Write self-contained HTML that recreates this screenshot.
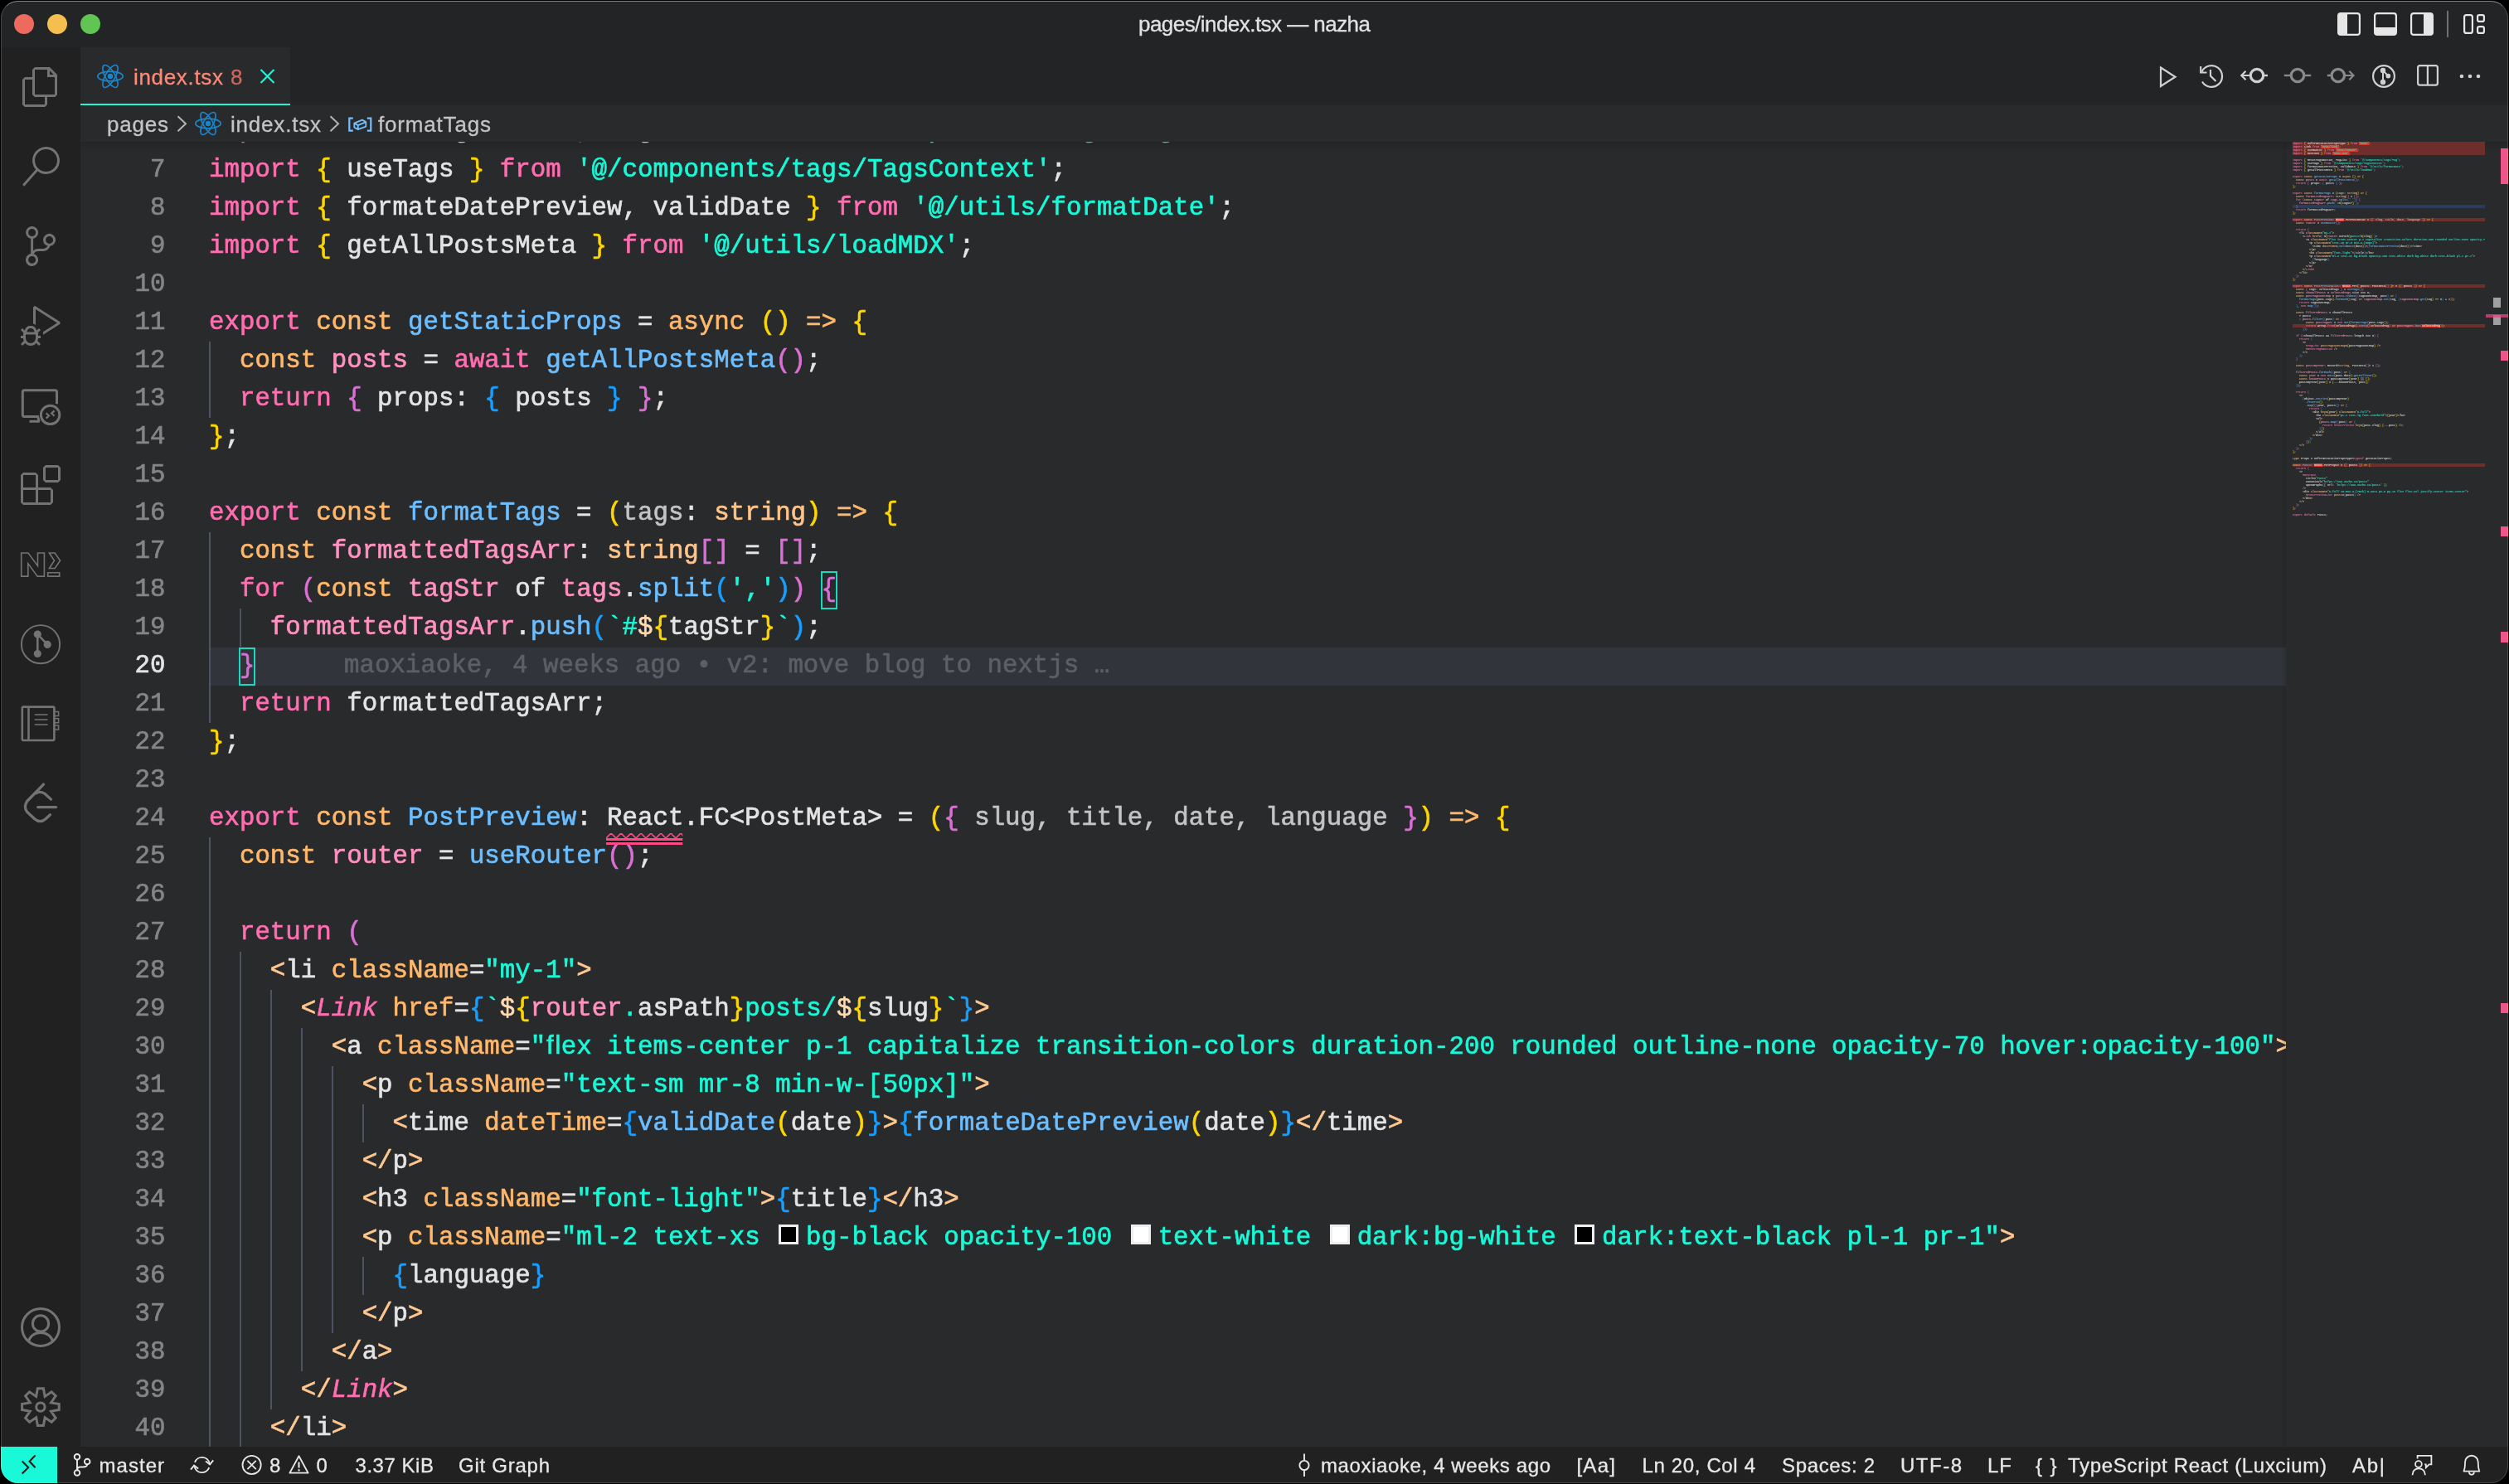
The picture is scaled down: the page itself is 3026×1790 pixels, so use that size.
<!DOCTYPE html>
<html><head><meta charset="utf-8"><title>pages/index.tsx — nazha</title>
<style>
*{box-sizing:border-box;margin:0;padding:0}
html,body{width:3026px;height:1790px;overflow:hidden;background:#000}
body{-webkit-text-stroke:.3px;font-family:"Liberation Sans",sans-serif;position:relative;-webkit-font-smoothing:antialiased}
.win{will-change:transform;position:absolute;left:1px;top:1px;width:3024px;height:1788px;border-radius:21px;overflow:hidden;background:#292a2c}
.winb{position:absolute;left:1px;top:1px;width:3024px;height:1788px;border-radius:21px;border:1px solid rgba(255,255,255,.16);border-top-color:rgba(255,255,255,.42);pointer-events:none;z-index:50}
.abs{position:absolute}
.title{position:absolute;left:0;top:0;width:3024px;height:56px;background:#232426}
.title .txt{position:absolute;left:0;width:3024px;top:8px;height:40px;line-height:40px;text-align:center;font-size:26px;color:#e2e2e2;letter-spacing:.1px}
.tl{position:absolute;top:16px;width:24px;height:24px;border-radius:50%}
.act{position:absolute;left:0;top:56px;width:96px;height:1688px;background:#212121}
.tabs{position:absolute;left:96px;top:56px;width:2928px;height:70px;background:#232426}
.tab{position:absolute;left:0;top:0;width:253px;height:70px;background:#292a2c;border-bottom:2px solid #19f9d8}
.bc{position:absolute;left:96px;top:126px;width:2928px;height:44px;background:#292a2c;font-size:26px;color:#c8c8c8}
.ed{position:absolute;left:96px;top:170px;width:2928px;height:1574px;background:#292a2c;overflow:hidden}
.code{-webkit-text-stroke:.65px;font-family:"Liberation Mono",monospace;font-size:30.778px;line-height:46px;white-space:pre;font-variant-ligatures:none}
.cl{position:absolute;left:155px;height:46px;color:#e4e4e4}
.ln{position:absolute;left:0;width:102.5px;text-align:right;height:46px;color:#858585}
.k{color:#ff6eb0}.o{color:#ffb86c}.o2{color:#ffc48a}.f{color:#6cbeff}.w{color:#e4e4e4}.v{color:#ff92c0}.p{color:#c4c4c4}
.s{color:#19f9d8}.b1{color:#ffd700}.b2{color:#da70d6}.b3{color:#179fff}.t{color:#ffc78f}.ki{color:#ff6eb0;font-style:italic}.d{color:#ffd9b0}
.cb{display:inline-block;width:24px;height:24px;border:3px solid #eee;margin:0 8.9px 0 4px;vertical-align:0px}
.g{position:absolute;width:2px;background:#4e5265}
.status{position:absolute;left:0;top:1744px;width:3024px;height:44px;background:#212121;font-size:24px;color:#e6e6e6}
.si{position:absolute;top:0;height:44px;line-height:45px;white-space:pre}
.mm{position:absolute;left:2668px;top:0px;width:232px;height:460px;overflow:hidden}
.mmt{position:absolute;left:0;top:0;transform-origin:0 0;transform:scale(0.166639);font-family:"Liberation Mono",monospace;font-size:20px;line-height:24px;white-space:pre;color:#e4e4e4;opacity:.85;font-weight:bold;-webkit-text-stroke:0}
.mmt div{height:24px}
svg{position:absolute;overflow:visible}
</style></head><body>
<div class="win">

<div class="title">
<div class="tl" style="left:16px;background:#ed6a5e"></div><div class="tl" style="left:56px;background:#f5bf4f"></div><div class="tl" style="left:96px;background:#61c554"></div>
<div class="abs" style="left:1372.0px;top:12.8px;font-size:26px;line-height:31px;height:31px;letter-spacing:-0.544px;color:#e2e2e2;white-space:pre;">pages/index.tsx — nazha</div>
<svg style="left:0px;top:0px" width="3024" height="56" viewBox="0 0 3024 56" ><g fill="none" stroke="#e6e6e6" stroke-width="2.2"><rect x="2819.1" y="15.1" width="25.8" height="25.8" rx="3"/><rect x="2863.1" y="15.1" width="25.8" height="25.8" rx="3"/><rect x="2907.1" y="15.1" width="25.8" height="25.8" rx="3"/></g><path fill="#e6e6e6" d="M2819 17a2 2 0 0 1 2-2h9v26h-9a2 2 0 0 1-2-2z"/><path fill="#e6e6e6" d="M2863 32h26v7a2 2 0 0 1-2 2h-22a2 2 0 0 1-2-2z"/><path fill="#e6e6e6" d="M2922 15h9a2 2 0 0 1 2 2v22a2 2 0 0 1-2 2h-9z"/><rect x="2950" y="12" width="2" height="32" fill="#707070"/><g fill="none" stroke="#e6e6e6" stroke-width="2.2"><rect x="2971.1" y="17.1" width="9.8" height="21.8" rx="2.5"/><rect x="2987.1" y="17.1" width="7.8" height="7.8" rx="2"/><rect x="2987.1" y="31.1" width="7.8" height="7.8" rx="2"/></g></svg>
</div>
<div class="act"><svg style="left:24px;top:24px" width="48" height="48" viewBox="0 0 24 24" ><path fill="#737373" d="M17.5 0h-9L7 1.5V6H2.5L1 7.5v15.07L2.5 24h12.07L16 22.57V18h4.7l1.3-1.43V4.5L17.5 0zm0 2.12l2.38 2.38H17.5V2.12zm-3 20.38h-12v-15H7v9.07L8.5 18h6v4.5zm6-6h-12v-15H16V6h4.5v10.5z"/></svg><svg style="left:24px;top:120px" width="48" height="48" viewBox="0 0 24 24" ><path fill="#737373" d="M15.25 0a8.25 8.25 0 0 0-6.18 13.72L1 22.88l1.12 1 8.05-9.12A8.251 8.251 0 1 0 15.25.01V0zm0 15a6.75 6.75 0 1 1 0-13.5 6.75 6.75 0 0 1 0 13.5z"/></svg><svg style="left:24px;top:216px" width="48" height="48" viewBox="0 0 24 24" ><path fill="#737373" d="M21.007 8.222A3.738 3.738 0 0 0 15.045 5.2a3.737 3.737 0 0 0 1.156 6.583 2.988 2.988 0 0 1-2.668 1.67h-2.99a4.456 4.456 0 0 0-2.989 1.165V7.4a3.737 3.737 0 1 0-1.494 0v9.117a3.776 3.776 0 1 0 1.816.099 2.99 2.99 0 0 1 2.668-1.667h2.99a4.484 4.484 0 0 0 4.223-3.039 3.736 3.736 0 0 0 3.25-3.687zM4.565 3.738a2.242 2.242 0 1 1 4.484 0 2.242 2.242 0 0 1-4.484 0zm4.484 16.441a2.242 2.242 0 1 1-4.484 0 2.242 2.242 0 0 1 4.484 0zm8.221-9.715a2.242 2.242 0 1 1 0-4.485 2.242 2.242 0 0 1 0 4.485z"/></svg><svg style="left:24px;top:312px" width="48" height="48" viewBox="0 0 24 24" ><path fill="#737373" d="M10.94 13.5l-1.32 1.32a3.73 3.73 0 0 0-7.24 0L1.06 13.5 0 14.56l1.72 1.72-.22.22V18H0v1.5h1.5v.08c.077.489.214.966.41 1.42L0 22.94 1.06 24l1.65-1.65A4.308 4.308 0 0 0 6 24a4.31 4.31 0 0 0 3.29-1.65L10.94 24 12 22.94 10.09 21c.198-.464.336-.951.41-1.45v-.1H12V18h-1.5v-1.5l-.22-.22L12 14.56l-1.06-1.06zM6 13.5a2.25 2.25 0 0 1 2.25 2.25h-4.5A2.25 2.25 0 0 1 6 13.5zm3 6a3.33 3.33 0 0 1-3 3 3.33 3.33 0 0 1-3-3v-2.25h6v2.25zm14.76-9.9v1.26L13.5 17.37V15.6l8.5-5.37L9 2v9.46a5.07 5.07 0 0 0-1.5-.72V.63L8.64 0l15.12 9.6z"/></svg><svg style="left:24px;top:504px" width="48" height="48" viewBox="0 0 24 24" ><path fill="#737373" d="M13.5 1.5L15 0h7.5L24 1.5V9l-1.5 1.5H15L13.5 9V1.5zm1.5 0V9h7.5V1.5H15zM0 15V6l1.5-1.5H9L10.5 6v7.5H18l1.5 1.5v7.5L18 24H1.5L0 22.5V15zm9-1.5V6H1.5v7.5H9zM9 15H1.5v7.5H9V15zm1.5 7.5H18V15h-7.5v7.5z"/></svg><svg style="left:24px;top:408px" width="48" height="48" viewBox="0 0 24 24" ><g fill="none" stroke="#737373" stroke-width="1.5"><path d="M21.75 11.1V3.85a1 1 0 0 0-1-1H2.15a1 1 0 0 0-1 1V17.75a1 1 0 0 0 1 1H10.3l.8 2.9"/><path d="M5.25 21.65H11.4" stroke-width="1.5"/><circle cx="17.8" cy="17.7" r="5.6"/><path d="M15.3 16.6l1.7 1.6-1.7 1.6M20.3 15.2l-1.7 1.6 1.7 1.6" stroke-width="1.1"/></g></svg><svg style="left:0px;top:0px" width="96" height="1688" viewBox="0 0 96 1688" ><g fill="none" stroke="#737373" stroke-width="1.6" stroke-linejoin="miter"><polygon points="24.7,610.0 33.0,610.0 44.5,625.6 44.5,610.0 52.4,610.0 52.4,638.1 44.1,638.1 32.8,622.6 32.8,638.1 24.7,638.1"/><polygon points="58.4,610.0 65.2,610.0 71.5,619.2 65.2,628.5 58.4,628.5 64.5,619.2"/><polygon points="56.7,633.8 70.7,633.8 70.7,638.1 56.7,638.1"/></g></svg><svg style="left:0px;top:0px" width="96" height="1688" viewBox="0 0 96 1688" ><circle cx="48" cy="720.2" r="23.1" fill="none" stroke="#737373" stroke-width="1.9"/><g fill="#737373" stroke="#737373" stroke-width="2.6"><circle cx="44.3" cy="708.1" r="3.3"/><circle cx="56.2" cy="720.4000000000001" r="3.3"/><circle cx="44.3" cy="731.5" r="3.3"/><path d="M44.3 708.1V731.5M44.3 708.1L56.2 720.4000000000001" fill="none"/></g></svg><svg style="left:0px;top:0px" width="96" height="1688" viewBox="0 0 96 1688" ><g fill="none" stroke="#737373"><rect x="25.8" y="795.6" width="38.6" height="40.4" rx="1.5" stroke-width="2.6"/><path d="M33.5 795.6V836" stroke-width="2.6"/><path d="M40.7 805H56.5M40.7 811H56.5M40.7 817H56.5" stroke-width="1.6"/><path d="M65 801.6h4.6v5h-4.6M65 809.8h4.6v5h-4.6M65 818h4.6v5h-4.6" stroke-width="1.5"/></g></svg><svg style="left:0px;top:0px" width="96" height="1688" viewBox="0 0 96 1688" ><g fill="none" stroke="#737373" stroke-width="3.3" stroke-linecap="round" stroke-linejoin="round"><path d="M51.5 889.1L31.6 909.5Q27.2 916.2 31.6 922.3L40.7 930.7Q47.4 936.5 54.1 930.7L59.5 925.8"/><path d="M42.7 899.7Q48.1 896.7 53.5 900.7L60.5 907.1"/><path d="M44.7 916.6L66.6 916.6"/></g></svg><svg style="left:0px;top:0px" width="96" height="1688" viewBox="0 0 96 1688" ><defs><clipPath id="accc"><circle cx="48" cy="1544" r="22.5"/></clipPath></defs><g fill="none" stroke="#737373" stroke-width="3"><circle cx="48" cy="1544" r="22.5"/><circle cx="48" cy="1539.4" r="9.6"/><path clip-path="url(#accc)" d="M32.5 1563Q36 1550.5 48 1550.5Q60 1550.5 63.5 1563"/></g></svg><svg style="left:0px;top:0px" width="96" height="1688" viewBox="0 0 96 1688" ><g fill="none" stroke="#737373" stroke-width="3" stroke-linejoin="miter"><polygon points="44.40,1617.77 51.40,1617.77 53.14,1627.44 61.22,1621.84 66.16,1626.78 60.56,1634.86 70.23,1636.60 70.23,1643.60 60.56,1645.34 66.16,1653.42 61.22,1658.36 53.14,1652.76 51.40,1662.43 44.40,1662.43 42.66,1652.76 34.58,1658.36 29.64,1653.42 35.24,1645.34 25.57,1643.60 25.57,1636.60 35.24,1634.86 29.64,1626.78 34.58,1621.84 42.66,1627.44"/><circle cx="47.9" cy="1640.1" r="5.2"/></g></svg></div>
<div class="tabs"><div class="tab"><svg style="left:0px;top:0px" width="253" height="70" viewBox="0 0 253 70" ><g fill="none" stroke="#1c85ca" stroke-width="1.7"><ellipse cx="36" cy="35" rx="15.2" ry="5.8" transform="rotate(0 36 35)"/><ellipse cx="36" cy="35" rx="15.2" ry="5.8" transform="rotate(60 36 35)"/><ellipse cx="36" cy="35" rx="15.2" ry="5.8" transform="rotate(120 36 35)"/></g><circle cx="36" cy="35" r="3.2" fill="#1c85ca"/></svg><div class="abs" style="left:64.0px;top:20.5px;font-size:26px;line-height:31px;height:31px;letter-spacing:0.674px;color:#ff8877;white-space:pre;">index.tsx</div><div class="abs" style="left:181.0px;top:20.5px;font-size:26px;line-height:31px;height:31px;letter-spacing:0.000px;color:#cf665c;white-space:pre;">8</div><svg style="left:0px;top:0px" width="253" height="70" viewBox="0 0 253 70" ><path d="M217.5 27L233.5 43M233.5 27L217.5 43" stroke="#19f9d8" stroke-width="2.2" fill="none"/></svg></div><svg style="left:0px;top:0px" width="2928" height="70" viewBox="0 0 2928 70" ><path d="M2509 24.5L2526.5 35.8L2509 47Z" fill="none" stroke="#d0d0d0" stroke-width="2.2" stroke-linejoin="miter"/><g fill="none" stroke="#d0d0d0" stroke-width="2.2"><path d="M2558.5 29.5A12.9 12.9 0 1 1 2559.0 41.5"/><path d="M2557.2 23V30.5H2564.5"/><path d="M2569 27V34.5L2575.5 41"/></g><g fill="none" stroke="#d0d0d0"><circle cx="2625" cy="34" r="7.7" stroke-width="3.2"/><path d="M2607 34H2616.5M2611.5 28.8L2606.3 34L2611.5 39.2" stroke-width="2.2"/><path d="M2633.5 34H2638" stroke-width="2.4"/></g><g fill="none" stroke="#8a8a8a"><circle cx="2674" cy="34" r="7.7" stroke-width="3.2"/><path d="M2657.8 34H2665.5" stroke-width="2.4"/><path d="M2682.5 34H2690.2" stroke-width="2.4"/></g><g fill="none" stroke="#8a8a8a"><circle cx="2722.8" cy="34" r="7.7" stroke-width="3.2"/><path d="M2709.8 34H2714.3" stroke-width="2.4"/><path d="M2731.3 34H2740.8M2736.3 28.8L2741.5 34L2736.3 39.2" stroke-width="2.2"/></g><circle cx="2778" cy="35" r="12.9" fill="none" stroke="#d0d0d0" stroke-width="2.2"/><g fill="#d0d0d0" stroke="#d0d0d0" stroke-width="2"><circle cx="2777" cy="28" r="2.2"/><circle cx="2777" cy="42" r="2.2"/><circle cx="2783.3" cy="34.6" r="1.9"/><path d="M2777 28V42M2777 28L2783.3 34.6" fill="none"/></g><g fill="none" stroke="#d0d0d0" stroke-width="2.2"><rect x="2819.1" y="22.099999999999994" width="23.8" height="23.6" rx="2.5"/><path d="M2830.9 22V46"/></g><circle cx="2871.9" cy="35" r="2.3" fill="#d0d0d0"/><circle cx="2882" cy="35" r="2.3" fill="#d0d0d0"/><circle cx="2892" cy="35" r="2.3" fill="#d0d0d0"/></svg></div>
<div class="bc"><div class="abs" style="left:32.0px;top:8.0px;font-size:26px;line-height:31px;height:31px;letter-spacing:0.789px;color:#c4c4c4;white-space:pre;">pages</div><div class="abs" style="left:181.0px;top:8.0px;font-size:26px;line-height:31px;height:31px;letter-spacing:0.799px;color:#c4c4c4;white-space:pre;">index.tsx</div><div class="abs" style="left:359.0px;top:8.0px;font-size:26px;line-height:31px;height:31px;letter-spacing:0.821px;color:#c4c4c4;white-space:pre;">formatTags</div><svg style="left:0px;top:0px" width="2928" height="45" viewBox="0 0 2928 45" ><path d="M117.5 13.300000000000011L127.0 22.30000000000001L117.5 31.30000000000001" fill="none" stroke="#b4b4b4" stroke-width="2"/><path d="M301.5 13.300000000000011L311.0 22.30000000000001L301.5 31.30000000000001" fill="none" stroke="#b4b4b4" stroke-width="2"/><g fill="none" stroke="#1c85ca" stroke-width="1.7"><ellipse cx="154" cy="22" rx="15.2" ry="5.8" transform="rotate(0 154 22)"/><ellipse cx="154" cy="22" rx="15.2" ry="5.8" transform="rotate(60 154 22)"/><ellipse cx="154" cy="22" rx="15.2" ry="5.8" transform="rotate(120 154 22)"/></g><circle cx="154" cy="22" r="3.2" fill="#1c85ca"/><g fill="none" stroke="#75beff" stroke-width="2.2"><path d="M328.8 15.599999999999994H324.3V30.599999999999994H328.8M345.8 15.599999999999994H350.3V30.599999999999994H345.8"/><path d="M330.3 21.599999999999994L339.8 17.599999999999994L344.3 20.099999999999994V25.599999999999994L334.8 29.099999999999994L330.3 26.599999999999994ZM330.3 21.599999999999994L334.8 24.099999999999994L344.3 20.099999999999994M334.8 24.099999999999994V29.099999999999994" stroke-width="1.8" stroke-linejoin="round"/></g></svg></div>
<div class="ed">
<div class="abs code" style="left:0;top:0;width:2660px;height:1574px;overflow:hidden">
<div class="abs" style="left:155px;top:610px;width:2505px;height:46px;background:#31343a"></div>
<div class="g" style="left:155.0px;top:241px;height:92px"></div>
<div class="g" style="left:155.0px;top:471px;height:230px"></div>
<div class="g" style="left:191.9px;top:563px;height:46px"></div>
<div class="g" style="left:155.0px;top:839px;height:736px"></div>
<div class="g" style="left:191.9px;top:977px;height:598px"></div>
<div class="g" style="left:228.9px;top:1023px;height:506px"></div>
<div class="g" style="left:265.8px;top:1069px;height:414px"></div>
<div class="g" style="left:302.8px;top:1115px;height:322px"></div>
<div class="g" style="left:339.7px;top:1161px;height:46px"></div>
<div class="g" style="left:339.7px;top:1345px;height:46px"></div>
<div class="ln" style="top:-35px">6</div>
<div class="cl" style="top:-37px"><span class="k">import</span> <span class="b1"> </span><span class="w"> ResetTagsButton, TagList </span><span class="b1"> </span> <span class="k">from</span> <span class="s">'@/components/tags/Tag'</span><span class="w">;</span></div>
<div class="ln" style="top:11px">7</div>
<div class="cl" style="top:11px"><span class="k">import</span> <span class="b1">{</span><span class="w"> useTags </span><span class="b1">}</span> <span class="k">from</span> <span class="s">'@/components/tags/TagsContext'</span><span class="w">;</span></div>
<div class="ln" style="top:57px">8</div>
<div class="cl" style="top:57px"><span class="k">import</span> <span class="b1">{</span><span class="w"> formateDatePreview, validDate </span><span class="b1">}</span> <span class="k">from</span> <span class="s">'@/utils/formatDate'</span><span class="w">;</span></div>
<div class="ln" style="top:103px">9</div>
<div class="cl" style="top:103px"><span class="k">import</span> <span class="b1">{</span><span class="w"> getAllPostsMeta </span><span class="b1">}</span> <span class="k">from</span> <span class="s">'@/utils/loadMDX'</span><span class="w">;</span></div>
<div class="ln" style="top:149px">10</div>
<div class="ln" style="top:195px">11</div>
<div class="cl" style="top:195px"><span class="k">export</span><span class="o"> const</span><span class="f"> getStaticProps</span><span class="w"> = </span><span class="o">async</span><span class="b1"> ()</span><span class="o"> =&gt;</span><span class="b1"> {</span></div>
<div class="ln" style="top:241px">12</div>
<div class="cl" style="top:241px">  <span class="o">const</span><span class="v"> posts</span><span class="w"> = </span><span class="k">await</span><span class="f"> getAllPostsMeta</span><span class="b2">()</span><span class="w">;</span></div>
<div class="ln" style="top:287px">13</div>
<div class="cl" style="top:287px">  <span class="k">return</span><span class="b2"> {</span><span class="w"> props: </span><span class="b3">{</span><span class="w"> posts </span><span class="b3">}</span><span class="b2"> }</span><span class="w">;</span></div>
<div class="ln" style="top:333px">14</div>
<div class="cl" style="top:333px"><span class="b1">}</span><span class="w">;</span></div>
<div class="ln" style="top:379px">15</div>
<div class="ln" style="top:425px">16</div>
<div class="cl" style="top:425px"><span class="k">export</span><span class="o"> const</span><span class="f"> formatTags</span><span class="w"> = </span><span class="b1">(</span><span class="p">tags</span><span class="w">: </span><span class="o2">string</span><span class="b1">)</span><span class="o"> =&gt;</span><span class="b1"> {</span></div>
<div class="ln" style="top:471px">17</div>
<div class="cl" style="top:471px">  <span class="o">const</span><span class="v"> formattedTagsArr</span><span class="w">: </span><span class="o2">string</span><span class="b2">[]</span><span class="w"> = </span><span class="b2">[]</span><span class="w">;</span></div>
<div class="ln" style="top:517px">18</div>
<div class="cl" style="top:517px">  <span class="k">for</span><span class="b2"> (</span><span class="o">const</span><span class="v"> tagStr</span><span class="w"> of </span><span class="v">tags</span><span class="w">.</span><span class="f">split</span><span class="b3">(</span><span class="s">','</span><span class="b3">)</span><span class="b2">)</span> <span class="b2">{</span></div>
<div class="ln" style="top:563px">19</div>
<div class="cl" style="top:563px">    <span class="v">formattedTagsArr</span><span class="w">.</span><span class="f">push</span><span class="b3">(</span><span class="s">`#</span><span class="d">$</span><span class="b1">{</span><span class="w">tagStr</span><span class="b1">}</span><span class="s">`</span><span class="b3">)</span><span class="w">;</span></div>
<div class="ln" style="top:609px;color:#e4e4e4">20</div>
<div class="cl" style="top:609px">  <span class="b2">}</span></div>
<div class="ln" style="top:655px">21</div>
<div class="cl" style="top:655px">  <span class="k">return</span><span class="w"> formattedTagsArr;</span></div>
<div class="ln" style="top:701px">22</div>
<div class="cl" style="top:701px"><span class="b1">}</span><span class="w">;</span></div>
<div class="ln" style="top:747px">23</div>
<div class="ln" style="top:793px">24</div>
<div class="cl" style="top:793px"><span class="k">export</span><span class="o"> const</span><span class="f"> PostPreview</span><span class="w">: React.FC&lt;PostMeta&gt; = </span><span class="b1">(</span><span class="b2">{</span><span class="p"> slug, title, date, language </span><span class="b2">}</span><span class="b1">)</span><span class="o"> =&gt;</span><span class="b1"> {</span></div>
<div class="ln" style="top:839px">25</div>
<div class="cl" style="top:839px">  <span class="o">const</span><span class="v"> router</span><span class="w"> = </span><span class="f">useRouter</span><span class="b2">()</span><span class="w">;</span></div>
<div class="ln" style="top:885px">26</div>
<div class="ln" style="top:931px">27</div>
<div class="cl" style="top:931px">  <span class="k">return</span><span class="b2"> (</span></div>
<div class="ln" style="top:977px">28</div>
<div class="cl" style="top:977px">    <span class="t">&lt;</span><span class="w">li </span><span class="o">className</span><span class="w">=</span><span class="s">"my-1"</span><span class="t">&gt;</span></div>
<div class="ln" style="top:1023px">29</div>
<div class="cl" style="top:1023px">      <span class="t">&lt;</span><span class="ki">Link</span> <span class="o">href</span><span class="w">=</span><span class="b3">{</span><span class="s">`</span><span class="d">$</span><span class="b1">{</span><span class="v">router</span><span class="s">.</span><span class="w">asPath</span><span class="b1">}</span><span class="s">posts/</span><span class="d">$</span><span class="b1">{</span><span class="w">slug</span><span class="b1">}</span><span class="s">`</span><span class="b3">}</span><span class="t">&gt;</span></div>
<div class="ln" style="top:1069px">30</div>
<div class="cl" style="top:1069px">        <span class="t">&lt;</span><span class="w">a </span><span class="o">className</span><span class="w">=</span><span class="s">"ﬂex items-center p-1 capitalize transition-colors duration-200 rounded outline-none opacity-70 hover:opacity-100"</span><span class="t">&gt;</span></div>
<div class="ln" style="top:1115px">31</div>
<div class="cl" style="top:1115px">          <span class="t">&lt;</span><span class="w">p </span><span class="o">className</span><span class="w">=</span><span class="s">"text-sm mr-8 min-w-[50px]"</span><span class="t">&gt;</span></div>
<div class="ln" style="top:1161px">32</div>
<div class="cl" style="top:1161px">            <span class="t">&lt;</span><span class="w">time </span><span class="o">dateTime</span><span class="w">=</span><span class="b3">{</span><span class="f">validDate</span><span class="b1">(</span><span class="w">date</span><span class="b1">)</span><span class="b3">}</span><span class="t">&gt;</span><span class="b3">{</span><span class="f">formateDatePreview</span><span class="b1">(</span><span class="w">date</span><span class="b1">)</span><span class="b3">}</span><span class="t">&lt;/</span><span class="w">time</span><span class="t">&gt;</span></div>
<div class="ln" style="top:1207px">33</div>
<div class="cl" style="top:1207px">          <span class="t">&lt;/</span><span class="w">p</span><span class="t">&gt;</span></div>
<div class="ln" style="top:1253px">34</div>
<div class="cl" style="top:1253px">          <span class="t">&lt;</span><span class="w">h3 </span><span class="o">className</span><span class="w">=</span><span class="s">"font-light"</span><span class="t">&gt;</span><span class="b3">{</span><span class="w">title</span><span class="b3">}</span><span class="t">&lt;/</span><span class="w">h3</span><span class="t">&gt;</span></div>
<div class="ln" style="top:1299px">35</div>
<div class="cl" style="top:1299px">          <span class="t">&lt;</span><span class="w">p </span><span class="o">className</span><span class="w">=</span><span class="s">"ml-2 text-xs </span><i class="cb" style="background:#000"></i><span class="s">bg-black opacity-100 </span><i class="cb" style="background:#fff"></i><span class="s">text-white </span><i class="cb" style="background:#fff"></i><span class="s">dark:bg-white </span><i class="cb" style="background:#000"></i><span class="s">dark:text-black pl-1 pr-1"</span><span class="t">&gt;</span></div>
<div class="ln" style="top:1345px">36</div>
<div class="cl" style="top:1345px">            <span class="b3">{</span><span class="w">language</span><span class="b3">}</span></div>
<div class="ln" style="top:1391px">37</div>
<div class="cl" style="top:1391px">          <span class="t">&lt;/</span><span class="w">p</span><span class="t">&gt;</span></div>
<div class="ln" style="top:1437px">38</div>
<div class="cl" style="top:1437px">        <span class="t">&lt;/</span><span class="w">a</span><span class="t">&gt;</span></div>
<div class="ln" style="top:1483px">39</div>
<div class="cl" style="top:1483px">      <span class="t">&lt;/</span><span class="ki">Link</span><span class="t">&gt;</span></div>
<div class="ln" style="top:1529px">40</div>
<div class="cl" style="top:1529px">    <span class="t">&lt;/</span><span class="w">li</span><span class="t">&gt;</span></div>
<div class="cl" style="top:609px;left:318px;color:#5c5f66">maoxiaoke, 4 weeks ago • v2: move blog to nextjs …</div>
<div class="abs" style="left:893.3px;top:518px;width:19.5px;height:46px;border:2px solid #19d9c0"></div>
<div class="abs" style="left:191.4px;top:610px;width:19.5px;height:46px;border:2px solid #19d9c0"></div>
<svg style="left:634.2px;top:834px" width="92.3" height="15" viewBox="0 0 92.3 15"><defs><clipPath id="sq"><rect x="0" y="0" width="92.3" height="15"/></clipPath></defs><g clip-path="url(#sq)"><rect x="0" y="9" width="100" height="2" fill="#0f201d"/><path d="M0,6 L6,0 L12,6 L18,0 L24,6 L30,0 L36,6 L42,0 L48,6 L54,0 L60,6 L66,0 L72,6 L78,0 L84,6 L90,0 L96,6" fill="none" stroke="#ff4983" stroke-width="1.6"/><rect x="0" y="6" width="100" height="3" fill="#ff4983"/><rect x="0" y="11" width="100" height="3" fill="#ff4983"/></g></svg>
</div>
<div class="abs" style="left:2654px;top:0;width:6px;height:1574px;background:linear-gradient(90deg,rgba(0,0,0,0),rgba(0,0,0,.10))"></div>
<div class="abs" style="left:0;top:0;width:2928px;height:11px;background:linear-gradient(rgba(0,0,0,.14),rgba(0,0,0,0))"></div>
<div class="mm">
<div class="abs" style="left:0px;top:0px;width:232px;height:16px;background:#6e2e2b"></div>
<div class="abs" style="left:0px;top:92px;width:232px;height:4px;background:#6e2e2b"></div>
<div class="abs" style="left:0px;top:172px;width:232px;height:4px;background:#6e2e2b"></div>
<div class="abs" style="left:0px;top:220px;width:232px;height:4px;background:#6e2e2b"></div>
<div class="abs" style="left:0px;top:388px;width:232px;height:4px;background:#6e2e2b"></div>
<div class="abs" style="left:0px;top:76px;width:232px;height:4px;background:#2b3c58"></div>
<div class="abs" style="left:80px;top:0px;width:12px;height:4px;background:#d63a2e"></div>
<div class="abs" style="left:34px;top:4px;width:22px;height:4px;background:#d63a2e"></div>
<div class="abs" style="left:52px;top:8px;width:26px;height:4px;background:#d63a2e"></div>
<div class="abs" style="left:48px;top:12px;width:20px;height:4px;background:#d63a2e"></div>
<div class="abs" style="left:52px;top:92px;width:10px;height:4px;background:#d63a2e"></div>
<div class="abs" style="left:60px;top:172px;width:10px;height:4px;background:#d63a2e"></div>
<div class="abs" style="left:156px;top:220px;width:22px;height:4px;background:#d63a2e"></div>
<div class="abs" style="left:26px;top:388px;width:10px;height:4px;background:#d63a2e"></div>
<div class="mmt"><div><span class="k">import</span> <span class="b1">{</span> <span class="w">InferGetStaticPropsType</span> <span class="b1">}</span> <span class="k">from</span> <span class="s">'next'</span><span class="w">;</span></div><div><span class="k">import</span> <span class="w">Link</span> <span class="k">from</span> <span class="s">'next/link'</span><span class="w">;</span></div><div><span class="k">import</span> <span class="b1">{</span> <span class="w">useRouter</span> <span class="b1">}</span> <span class="k">from</span> <span class="s">'next/router'</span><span class="w">;</span></div><div><span class="k">import</span> <span class="b1">{</span> <span class="w">NextSeo</span> <span class="b1">}</span> <span class="k">from</span> <span class="s">'next-seo'</span><span class="w">;</span></div><div></div><div><span class="k">import</span> <span class="b1">{</span><span class="w"> ResetTagsButton, TagList </span><span class="b1">}</span> <span class="k">from</span> <span class="s">'@/components/tags/Tag'</span><span class="w">;</span></div><div><span class="k">import</span> <span class="b1">{</span><span class="w"> useTags </span><span class="b1">}</span> <span class="k">from</span> <span class="s">'@/components/tags/TagsContext'</span><span class="w">;</span></div><div><span class="k">import</span> <span class="b1">{</span><span class="w"> formateDatePreview, validDate </span><span class="b1">}</span> <span class="k">from</span> <span class="s">'@/utils/formatDate'</span><span class="w">;</span></div><div><span class="k">import</span> <span class="b1">{</span><span class="w"> getAllPostsMeta </span><span class="b1">}</span> <span class="k">from</span> <span class="s">'@/utils/loadMDX'</span><span class="w">;</span></div><div></div><div><span class="k">export</span><span class="o"> const</span><span class="f"> getStaticProps</span><span class="w"> = </span><span class="o">async</span><span class="b1"> ()</span><span class="o"> =&gt;</span><span class="b1"> {</span></div><div>  <span class="o">const</span><span class="v"> posts</span><span class="w"> = </span><span class="k">await</span><span class="f"> getAllPostsMeta</span><span class="b2">()</span><span class="w">;</span></div><div>  <span class="k">return</span><span class="b2"> {</span><span class="w"> props: </span><span class="b3">{</span><span class="w"> posts </span><span class="b3">}</span><span class="b2"> }</span><span class="w">;</span></div><div><span class="b1">}</span><span class="w">;</span></div><div></div><div><span class="k">export</span><span class="o"> const</span><span class="f"> formatTags</span><span class="w"> = </span><span class="b1">(</span><span class="p">tags</span><span class="w">: </span><span class="o2">string</span><span class="b1">)</span><span class="o"> =&gt;</span><span class="b1"> {</span></div><div>  <span class="o">const</span><span class="v"> formattedTagsArr</span><span class="w">: </span><span class="o2">string</span><span class="b2">[]</span><span class="w"> = </span><span class="b2">[]</span><span class="w">;</span></div><div>  <span class="k">for</span><span class="b2"> (</span><span class="o">const</span><span class="v"> tagStr</span><span class="w"> of </span><span class="v">tags</span><span class="w">.</span><span class="f">split</span><span class="b3">(</span><span class="s">','</span><span class="b3">)</span><span class="b2">)</span> <span class="b2">{</span></div><div>    <span class="v">formattedTagsArr</span><span class="w">.</span><span class="f">push</span><span class="b3">(</span><span class="s">`#</span><span class="d">$</span><span class="b1">{</span><span class="w">tagStr</span><span class="b1">}</span><span class="s">`</span><span class="b3">)</span><span class="w">;</span></div><div>  <span class="b2">}</span></div><div>  <span class="k">return</span><span class="w"> formattedTagsArr;</span></div><div><span class="b1">}</span><span class="w">;</span></div><div></div><div><span class="k">export</span><span class="o"> const</span><span class="f"> PostPreview</span><span class="w">: React.FC&lt;PostMeta&gt; = </span><span class="b1">(</span><span class="b2">{</span><span class="p"> slug, title, date, language </span><span class="b2">}</span><span class="b1">)</span><span class="o"> =&gt;</span><span class="b1"> {</span></div><div>  <span class="o">const</span><span class="v"> router</span><span class="w"> = </span><span class="f">useRouter</span><span class="b2">()</span><span class="w">;</span></div><div></div><div>  <span class="k">return</span><span class="b2"> (</span></div><div>    <span class="t">&lt;</span><span class="w">li </span><span class="o">className</span><span class="w">=</span><span class="s">"my-1"</span><span class="t">&gt;</span></div><div>      <span class="t">&lt;</span><span class="ki">Link</span> <span class="o">href</span><span class="w">=</span><span class="b3">{</span><span class="s">`</span><span class="d">$</span><span class="b1">{</span><span class="v">router</span><span class="s">.</span><span class="w">asPath</span><span class="b1">}</span><span class="s">posts/</span><span class="d">$</span><span class="b1">{</span><span class="w">slug</span><span class="b1">}</span><span class="s">`</span><span class="b3">}</span><span class="t">&gt;</span></div><div>        <span class="t">&lt;</span><span class="w">a </span><span class="o">className</span><span class="w">=</span><span class="s">"flex items-center p-1 capitalize transition-colors duration-200 rounded outline-none opacity-70 hover:opacity-100"</span><span class="t">&gt;</span></div><div>          <span class="t">&lt;</span><span class="w">p </span><span class="o">className</span><span class="w">=</span><span class="s">"text-sm mr-8 min-w-[50px]"</span><span class="t">&gt;</span></div><div>            <span class="t">&lt;</span><span class="w">time </span><span class="o">dateTime</span><span class="w">=</span><span class="b3">{</span><span class="f">validDate</span><span class="b1">(</span><span class="w">date</span><span class="b1">)</span><span class="b3">}</span><span class="t">&gt;</span><span class="b3">{</span><span class="f">formateDatePreview</span><span class="b1">(</span><span class="w">date</span><span class="b1">)</span><span class="b3">}</span><span class="t">&lt;/</span><span class="w">time</span><span class="t">&gt;</span></div><div>          <span class="t">&lt;/</span><span class="w">p</span><span class="t">&gt;</span></div><div>          <span class="t">&lt;</span><span class="w">h3 </span><span class="o">className</span><span class="w">=</span><span class="s">"font-light"</span><span class="t">&gt;</span><span class="b3">{</span><span class="w">title</span><span class="b3">}</span><span class="t">&lt;/</span><span class="w">h3</span><span class="t">&gt;</span></div><div>          <span class="t">&lt;</span><span class="w">p </span><span class="o">className</span><span class="w">=</span><span class="s">"ml-2 text-xs </span><span class="s">bg-black opacity-100 </span><span class="s">text-white </span><span class="s">dark:bg-white </span><span class="s">dark:text-black pl-1 pr-1"</span><span class="t">&gt;</span></div><div>            <span class="b3">{</span><span class="w">language</span><span class="b3">}</span></div><div>          <span class="t">&lt;/</span><span class="w">p</span><span class="t">&gt;</span></div><div>        <span class="t">&lt;/</span><span class="w">a</span><span class="t">&gt;</span></div><div>      <span class="t">&lt;/</span><span class="ki">Link</span><span class="t">&gt;</span></div><div>    <span class="t">&lt;/</span><span class="w">li</span><span class="t">&gt;</span></div><div>  <span class="b2">)</span><span class="w">;</span></div><div><span class="b1">}</span><span class="w">;</span></div><div></div><div><span class="k">export</span> <span class="o">const</span> <span class="f">PostPreviewList</span><span class="w">:</span> <span class="w">React</span><span class="w">.</span><span class="w">FC</span><span class="w">&lt;</span><span class="b1">{</span> <span class="w">posts</span><span class="w">:</span> <span class="w">PostMeta</span><span class="b2">[</span><span class="b2">]</span> <span class="b1">}</span><span class="t">&gt;</span> <span class="w">=</span> <span class="b1">(</span><span class="b2">{</span> <span class="w">posts</span> <span class="b2">}</span><span class="b1">)</span> <span class="o">=&gt;</span> <span class="b1">{</span></div><div>  <span class="o">const</span> <span class="b2">{</span> <span class="w">tags</span><span class="w">:</span> <span class="w">selectedTags</span> <span class="b2">}</span> <span class="w">=</span> <span class="f">useTags</span><span class="b2">(</span><span class="b2">)</span><span class="w">;</span></div><div>  <span class="o">const</span> <span class="v">showAllPosts</span> <span class="w">=</span> <span class="v">selectedTags</span><span class="w">.</span><span class="w">size</span> <span class="w">=</span><span class="w">=</span><span class="w">=</span> <span class="w">0</span><span class="w">;</span></div><div>  <span class="o">const</span> <span class="v">postTagCountMap</span> <span class="w">=</span> <span class="v">posts</span><span class="w">.</span><span class="f">reduce</span><span class="b2">(</span><span class="b3">(</span><span class="w">tagCountMap</span><span class="w">,</span> <span class="w">post</span><span class="b3">)</span> <span class="o">=&gt;</span> <span class="b3">{</span></div><div>    <span class="f">formatTags</span><span class="b1">(</span><span class="w">post</span><span class="w">.</span><span class="w">tags</span><span class="b1">)</span><span class="w">.</span><span class="f">forEach</span><span class="b1">(</span><span class="b2">(</span><span class="w">tag</span><span class="b2">)</span> <span class="o">=&gt;</span> <span class="v">tagCountMap</span><span class="w">.</span><span class="f">set</span><span class="b2">(</span><span class="w">tag</span><span class="w">,</span> <span class="b3">(</span><span class="v">tagCountMap</span><span class="w">.</span><span class="f">get</span><span class="b1">(</span><span class="w">tag</span><span class="b1">)</span> <span class="w">?</span><span class="w">?</span> <span class="w">0</span><span class="b3">)</span> <span class="w">+</span> <span class="w">1</span><span class="b2">)</span><span class="b1">)</span><span class="w">;</span></div><div>    <span class="k">return</span> <span class="w">tagCountMap</span><span class="w">;</span></div><div>  <span class="b3">}</span><span class="w">,</span> <span class="k">new</span> <span class="f">Map</span><span class="b3">(</span><span class="b3">)</span><span class="b2">)</span><span class="w">;</span></div><div></div><div>  <span class="o">const</span> <span class="v">filteredPosts</span> <span class="w">=</span> <span class="w">showAllPosts</span></div><div>    <span class="w">?</span> <span class="w">posts</span></div><div>    <span class="w">:</span> <span class="v">posts</span><span class="w">.</span><span class="f">filter</span><span class="b2">(</span><span class="b3">(</span><span class="w">post</span><span class="b3">)</span> <span class="o">=&gt;</span> <span class="b3">{</span></div><div>        <span class="o">const</span> <span class="v">postTagSet</span> <span class="w">=</span> <span class="k">new</span> <span class="f">Set</span><span class="b1">(</span><span class="f">formatTags</span><span class="b2">(</span><span class="w">post</span><span class="w">.</span><span class="w">tags</span><span class="b2">)</span><span class="b1">)</span><span class="w">;</span></div><div>        <span class="k">return</span> <span class="w">Array</span><span class="w">.</span><span class="k">from</span><span class="b1">(</span><span class="w">selectedTags</span><span class="b1">)</span><span class="w">.</span><span class="f">every</span><span class="b1">(</span><span class="b2">(</span><span class="w">selectedTag</span><span class="b2">)</span> <span class="o">=&gt;</span> <span class="v">postTagSet</span><span class="w">.</span><span class="f">has</span><span class="b2">(</span><span class="w">selectedTag</span><span class="b2">)</span><span class="b1">)</span><span class="w">;</span></div><div>      <span class="b3">}</span><span class="b2">)</span><span class="w">;</span></div><div></div><div>  <span class="k">if</span> <span class="b2">(</span><span class="w">!</span><span class="w">showAllPosts</span> <span class="w">&amp;</span><span class="w">&amp;</span> <span class="v">filteredPosts</span><span class="w">.</span><span class="w">length</span> <span class="w">=</span><span class="w">=</span><span class="w">=</span> <span class="w">0</span><span class="b2">)</span> <span class="b2">{</span></div><div>    <span class="k">return</span> <span class="b3">(</span></div><div>      <span class="t">&lt;</span><span class="w">&gt;</span></div><div>        <span class="t">&lt;</span><span class="ki">TagList</span> <span class="o">postTagCountMap</span><span class="w">=</span><span class="b1">{</span><span class="w">postTagCountMap</span><span class="b1">}</span> <span class="t">/&gt;</span></div><div>        <span class="t">&lt;</span><span class="ki">ResetTagsButton</span> <span class="t">/&gt;</span></div><div>      <span class="t">&lt;/</span><span class="w">&gt;</span></div><div>    <span class="b3">)</span><span class="w">;</span></div><div>  <span class="b2">}</span></div><div></div><div>  <span class="o">const</span> <span class="v">postsByYear</span><span class="w">:</span> <span class="w">Record</span><span class="w">&lt;</span><span class="o">string</span><span class="w">,</span> <span class="w">PostMeta</span><span class="b2">[</span><span class="b2">]</span><span class="w">&gt;</span> <span class="w">=</span> <span class="b2">{</span><span class="b2">}</span><span class="w">;</span></div><div></div><div>  <span class="v">filteredPosts</span><span class="w">.</span><span class="f">forEach</span><span class="b2">(</span><span class="b3">(</span><span class="w">post</span><span class="b3">)</span> <span class="o">=&gt;</span> <span class="b3">{</span></div><div>    <span class="o">const</span> <span class="v">year</span> <span class="w">=</span> <span class="k">new</span> <span class="f">Date</span><span class="b1">(</span><span class="w">post</span><span class="w">.</span><span class="w">date</span><span class="b1">)</span><span class="w">.</span><span class="f">getFullYear</span><span class="b1">(</span><span class="b1">)</span><span class="w">;</span></div><div>    <span class="o">const</span> <span class="v">knownPosts</span> <span class="w">=</span> <span class="w">postsByYear</span><span class="b1">[</span><span class="w">year</span><span class="b1">]</span> <span class="w">|</span><span class="w">|</span> <span class="b1">[</span><span class="b1">]</span><span class="w">;</span></div><div>    <span class="w">postsByYear</span><span class="b1">[</span><span class="w">year</span><span class="b1">]</span> <span class="w">=</span> <span class="b1">[</span><span class="w">.</span><span class="w">.</span><span class="w">.</span><span class="w">knownPosts</span><span class="w">,</span> <span class="w">post</span><span class="b1">]</span><span class="w">;</span></div><div>  <span class="b3">}</span><span class="b2">)</span><span class="w">;</span></div><div></div><div>  <span class="k">return</span> <span class="b2">(</span></div><div>    <span class="t">&lt;</span><span class="w">&gt;</span></div><div>      <span class="b3">{</span><span class="w">Object</span><span class="w">.</span><span class="f">entries</span><span class="b1">(</span><span class="w">postsByYear</span><span class="b1">)</span></div><div>        <span class="w">.</span><span class="f">reverse</span><span class="b1">(</span><span class="b1">)</span></div><div>        <span class="w">.</span><span class="f">map</span><span class="b1">(</span><span class="b2">(</span><span class="b3">[</span><span class="w">year</span><span class="w">,</span> <span class="w">posts</span><span class="b3">]</span><span class="b2">)</span> <span class="o">=&gt;</span> <span class="b2">{</span></div><div>          <span class="k">return</span> <span class="b3">(</span></div><div>            <span class="t">&lt;</span><span class="w">div</span> <span class="o">key</span><span class="w">=</span><span class="b1">{</span><span class="w">year</span><span class="b1">}</span> <span class="o">className</span><span class="w">=</span><span class="s">"w-full"</span><span class="t">&gt;</span></div><div>              <span class="t">&lt;</span><span class="w">h2</span> <span class="o">className</span><span class="w">=</span><span class="s">"pt-1 text-lg font-semibold"</span><span class="t">&gt;</span><span class="b1">{</span><span class="w">year</span><span class="b1">}</span><span class="t">&lt;/</span><span class="w">h2</span><span class="t">&gt;</span></div><div>              <span class="t">&lt;</span><span class="w">ul</span><span class="t">&gt;</span></div><div>                <span class="b1">{</span><span class="v">posts</span><span class="w">.</span><span class="f">map</span><span class="b2">(</span><span class="b3">(</span><span class="w">post</span><span class="b3">)</span> <span class="o">=&gt;</span> <span class="b3">{</span></div><div>                  <span class="k">return</span> <span class="t">&lt;</span><span class="ki">PostPreview</span> <span class="o">key</span><span class="w">=</span><span class="b1">{</span><span class="w">post</span><span class="w">.</span><span class="w">slug</span><span class="b1">}</span> <span class="b1">{</span><span class="w">.</span><span class="w">.</span><span class="w">.</span><span class="w">post</span><span class="b1">}</span> <span class="t">/&gt;</span><span class="w">;</span></div><div>                <span class="b3">}</span><span class="b2">)</span><span class="b1">}</span></div><div>              <span class="t">&lt;/</span><span class="w">ul</span><span class="t">&gt;</span></div><div>            <span class="t">&lt;/</span><span class="w">div</span><span class="t">&gt;</span></div><div>          <span class="b3">)</span><span class="w">;</span></div><div>        <span class="b2">}</span><span class="b1">)</span><span class="b3">}</span></div><div>    <span class="t">&lt;/</span><span class="w">&gt;</span></div><div>  <span class="b2">)</span><span class="w">;</span></div><div><span class="b1">}</span><span class="w">;</span></div><div></div><div><span class="o">type</span> <span class="w">Props</span> <span class="w">=</span> <span class="w">InferGetStaticPropsType</span><span class="w">&lt;</span><span class="k">typeof</span> <span class="w">getStaticProps</span><span class="w">&gt;</span><span class="w">;</span></div><div></div><div><span class="o">const</span> <span class="f">Posts</span><span class="w">:</span> <span class="w">React</span><span class="w">.</span><span class="w">FC</span><span class="w">&lt;</span><span class="w">Props</span><span class="w">&gt;</span> <span class="w">=</span> <span class="b1">(</span><span class="b2">{</span> <span class="w">posts</span> <span class="b2">}</span><span class="b1">)</span> <span class="o">=&gt;</span> <span class="b1">{</span></div><div>  <span class="k">return</span> <span class="b2">(</span></div><div>    <span class="t">&lt;</span><span class="w">&gt;</span></div><div>      <span class="t">&lt;</span><span class="ki">NextSeo</span></div><div>        <span class="w">title</span><span class="w">=</span><span class="s">"Posts"</span></div><div>        <span class="w">canonical</span><span class="w">=</span><span class="s">"htfps://www.nazha.co/posts"</span></div><div>        <span class="w">openGraph</span><span class="w">=</span><span class="b3">{</span><span class="b1">{</span> <span class="w">url</span><span class="w">:</span> <span class="s">'htfps://www.nazha.co/posts'</span> <span class="b1">}</span><span class="b3">}</span></div><div>      <span class="t">/&gt;</span></div><div>      <span class="t">&lt;</span><span class="w">div</span> <span class="o">className</span><span class="w">=</span><span class="s">"w-full sm:max-w-[75ch] m-auto px-6 py-16 flex flex-col justify-center items-center"</span><span class="t">&gt;</span></div><div>        <span class="t">&lt;</span><span class="ki">PostPreviewList</span> <span class="o">posts</span><span class="w">=</span><span class="b3">{</span><span class="w">posts</span><span class="b3">}</span> <span class="t">/&gt;</span></div><div>      <span class="t">&lt;/</span><span class="w">div</span><span class="t">&gt;</span></div><div>    <span class="t">&lt;/</span><span class="w">&gt;</span></div><div>  <span class="b2">)</span><span class="w">;</span></div><div><span class="b1">}</span><span class="w">;</span></div><div></div><div><span class="k">export</span> <span class="k">default</span> <span class="w">Posts</span><span class="w">;</span></div></div></div>
<div class="abs" style="left:2919px;top:8px;width:9px;height:43px;background:#f0558a"></div>
<div class="abs" style="left:2919px;top:252px;width:9px;height:12px;background:#f0558a"></div>
<div class="abs" style="left:2919px;top:464px;width:9px;height:12px;background:#f0558a"></div>
<div class="abs" style="left:2919px;top:591px;width:9px;height:13px;background:#f0558a"></div>
<div class="abs" style="left:2919px;top:1039px;width:9px;height:12px;background:#f0558a"></div>
<div class="abs" style="left:2910px;top:188px;width:9px;height:12px;background:#a0a0a0"></div>
<div class="abs" style="left:2910px;top:209px;width:9px;height:12px;background:#a0a0a0"></div>
<div class="abs" style="left:2901px;top:208px;width:27px;height:4px;background:rgba(230,70,130,.75)"></div>
</div>
<div class="status"><div class="abs" style="left:0;top:0;width:68px;height:44px;background:#19f9d8"></div><svg style="left:0px;top:0px" width="3024" height="44" viewBox="0 0 3024 44" ><path d="M25.7 17.5L33.2 25L25.7 32.5M41.6 10.400000000000091L34.6 17.799999999999955L41.6 25.200000000000045" fill="none" stroke="#1e1e1e" stroke-width="2.1"/><g fill="none" stroke="#e8e8e8" stroke-width="1.9"><circle cx="92" cy="12.299999999999955" r="3.3"/><circle cx="104.2" cy="18" r="3.3"/><circle cx="92" cy="31.5" r="3.3"/><path d="M92 15.599999999999909V28.200000000000045M104.2 21.299999999999955Q104.2 24.5 99 24.5H96Q92 24.5 92 28.200000000000045"/></g><g fill="none" stroke="#e8e8e8" stroke-width="1.9"><path d="M234.0 18.9A9.2 9.2 0 0 1 251.7 20.4"/><path d="M251.2 25.1A9.2 9.2 0 0 1 233.5 23.6"/><path d="M246.99999999999997 17.5L252.1 21.4L256.2 16.4"/><path d="M238.20000000000002 26.5L233.1 22.6L229.0 27.6"/></g><g fill="none" stroke="#e8e8e8" stroke-width="1.8"><circle cx="302.6" cy="22" r="11.1"/><path d="M297.40000000000003 16.8L307.8 27.2M307.8 16.8L297.40000000000003 27.2"/></g><g fill="none" stroke="#e8e8e8" stroke-width="1.8" stroke-linejoin="round"><path d="M359.5 11.200000000000045L370.6 31.700000000000045H348.4Z"/><path d="M359.5 18.5V25.5M359.5 27.299999999999955V29.59999999999991" stroke-width="2.1"/></g><g fill="none" stroke="#e8e8e8" stroke-width="1.9"><circle cx="1572" cy="22.5" r="5.6"/><path d="M1572 8.5V16.9M1572 28.1V36.0"/></g><g fill="none" stroke="#e8e8e8" stroke-width="1.8" stroke-linejoin="miter"><path d="M2914.6 14.400000000000091V10.900000000000091H2931.4V21.299999999999955H2928.6L2924.8 25.200000000000045V21.299999999999955H2923.2"/><circle cx="2915.9" cy="21.09999999999991" r="3.9"/><path d="M2908.5 34.200000000000045Q2909 26.40000000000009 2916.2 26.40000000000009Q2923.4 26.40000000000009 2923.9 34.200000000000045"/></g><g fill="none" stroke="#e8e8e8" stroke-width="1.8" stroke-linejoin="round"><path d="M2970.5 29.700000000000045H2989.3Q2987.7000000000003 25.5 2987.7000000000003 18.40000000000009A7.8 7.7 0 0 0 2972.1 18.40000000000009Q2972.1 25.5 2970.5 29.700000000000045Z"/><path d="M2976.9 30.59999999999991A3 3.2 0 0 0 2982.9 30.59999999999991"/></g></svg><div class="abs" style="left:118.5px;top:8.2px;font-size:24px;line-height:29px;height:29px;letter-spacing:1.030px;color:#e8e8e8;white-space:pre;">master</div><div class="abs" style="left:324.0px;top:8.2px;font-size:24px;line-height:29px;height:29px;letter-spacing:0.000px;color:#e8e8e8;white-space:pre;">8</div><div class="abs" style="left:380.5px;top:8.2px;font-size:24px;line-height:29px;height:29px;letter-spacing:0.000px;color:#e8e8e8;white-space:pre;">0</div><div class="abs" style="left:427.5px;top:8.2px;font-size:24px;line-height:29px;height:29px;letter-spacing:0.539px;color:#e8e8e8;white-space:pre;">3.37 KiB</div><div class="abs" style="left:552.0px;top:8.2px;font-size:24px;line-height:29px;height:29px;letter-spacing:0.745px;color:#e8e8e8;white-space:pre;">Git Graph</div><div class="abs" style="left:1592.0px;top:8.2px;font-size:24px;line-height:29px;height:29px;letter-spacing:0.612px;color:#e8e8e8;white-space:pre;">maoxiaoke, 4 weeks ago</div><div class="abs" style="left:1900.4px;top:8.2px;font-size:24px;line-height:29px;height:29px;letter-spacing:1.303px;color:#e8e8e8;white-space:pre;">[Aa]</div><div class="abs" style="left:1979.5px;top:8.2px;font-size:24px;line-height:29px;height:29px;letter-spacing:0.643px;color:#e8e8e8;white-space:pre;">Ln 20, Col 4</div><div class="abs" style="left:2148.0px;top:8.2px;font-size:24px;line-height:29px;height:29px;letter-spacing:0.658px;color:#e8e8e8;white-space:pre;">Spaces: 2</div><div class="abs" style="left:2291.0px;top:8.2px;font-size:24px;line-height:29px;height:29px;letter-spacing:1.502px;color:#e8e8e8;white-space:pre;">UTF-8</div><div class="abs" style="left:2396.0px;top:8.2px;font-size:24px;line-height:29px;height:29px;letter-spacing:0.992px;color:#e8e8e8;white-space:pre;">LF</div><div class="abs" style="left:2454.0px;top:8.2px;font-size:24px;line-height:29px;height:29px;letter-spacing:1.400px;color:#e8e8e8;white-space:pre;">{ }</div><div class="abs" style="left:2493.0px;top:8.2px;font-size:24px;line-height:29px;height:29px;letter-spacing:0.690px;color:#e8e8e8;white-space:pre;">TypeScript React (Luxcium)</div><div class="abs" style="left:2836.0px;top:8.2px;font-size:24px;line-height:29px;height:29px;letter-spacing:1.705px;color:#e8e8e8;white-space:pre;">Ab|</div></div>
</div><div class="winb"></div></body></html>
